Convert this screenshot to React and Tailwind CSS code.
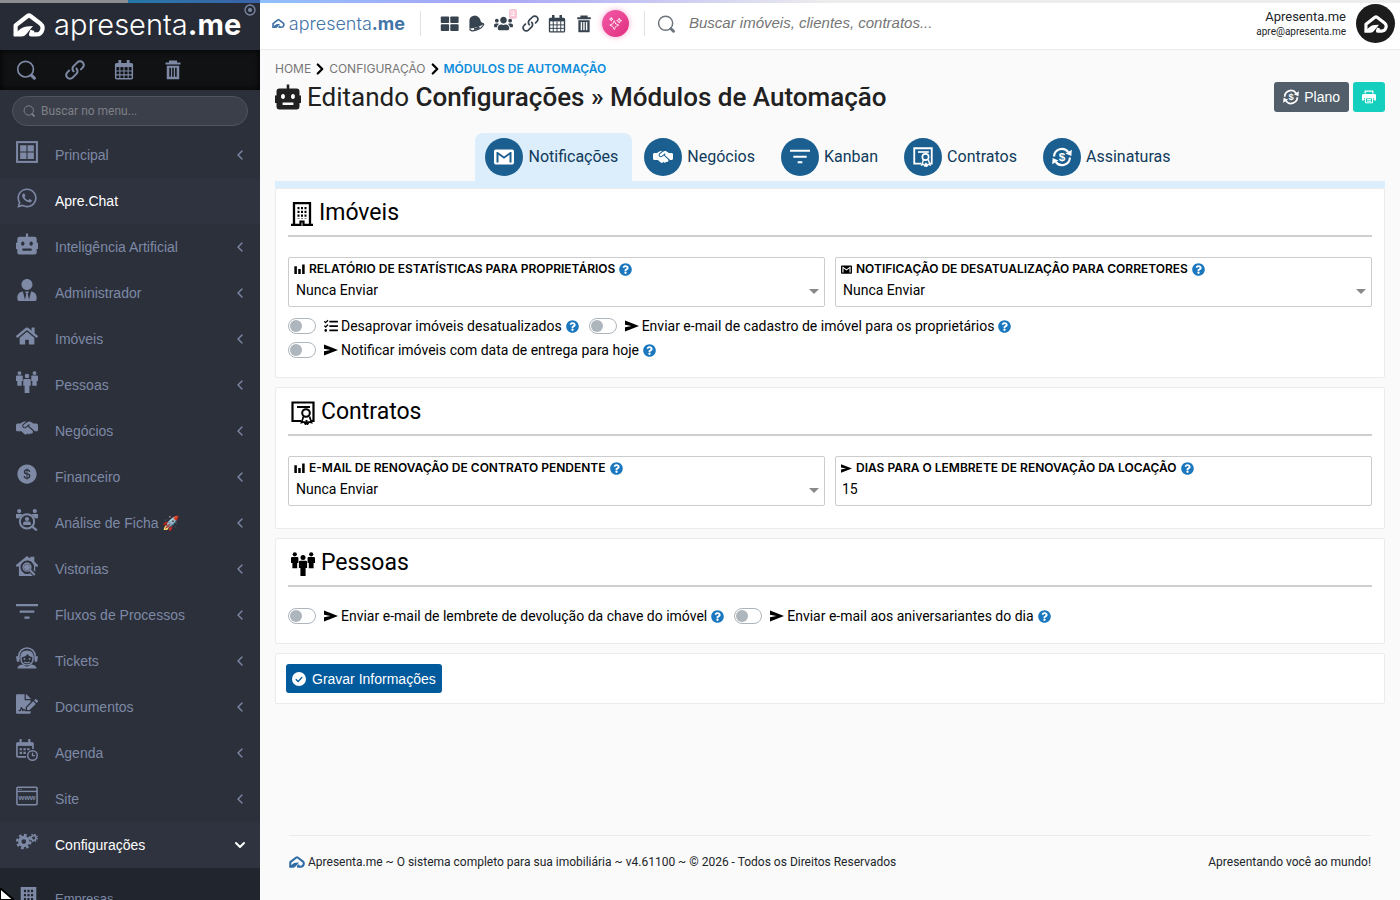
import { FaFileSignature, FaHome, FaQuestionCircle, FaTasks, FaUsers, FaUserTie, FaWhatsapp } from "react-icons/fa";
import { FaHandshakeSimple } from "react-icons/fa6";
import { AiFillDollarCircle } from "react-icons/ai";
import { ImLink } from "react-icons/im";
import { IoSparklesOutline } from "react-icons/io5";
import { ChevronDown, ChevronLeft, ChevronRight } from "lucide-react";

/* ---------- Icons ---------- */

function Icon({ className, children }) {
  return (
    <svg viewBox="0 0 24 24" className={className} fill="none" stroke="currentColor" strokeWidth="2" aria-hidden="true">
      {children}
    </svg>
  );
}

function LogoMark({ className }) {
  return (
    <svg viewBox="0 0 32 24" className={className} fill="none" stroke="currentColor" strokeWidth="4.2" strokeLinejoin="round" aria-hidden="true">
      <path d="M2.6 22V12.4L14.6 3Q16 2 17.4 3L27.400 10.600Q30.400 13 29.300 16.800Q28 21.400 23.600 21.400H18L19.400 17.400" />
      <path d="M.6 23.500V21.500L8 15.600Q10.500 13.600 13.500 13.400L20 13L13.200 21.200Q11.400 23.500 8.600 23.500z" fill="currentColor" stroke="none" />
    </svg>
  );
}

function SearchIcon({ className }) {
  return (
    <Icon className={className}>
      <circle cx="11.5" cy="11" r="9.4" strokeWidth="2" />
      <path d="M18.6 18.4l3.4 3.4" strokeWidth="3.8" strokeLinecap="round" />
    </Icon>
  );
}

function CalendarIcon({ className }) {
  return (
    <Icon className={className}>
      <rect x="2" y="4.5" width="20" height="18" rx="1.2" strokeWidth="1.8" />
      <path d="M2 4.5h20v4H2z" fill="currentColor" stroke="none" />
      <path d="M7 1v6M17 1v6" strokeWidth="3.4" strokeLinecap="round" />
      <path d="M2 13.2h20M2 17.8h20M7 8.5v14M12 8.5v14M17 8.5v14" strokeWidth="1.3" />
    </Icon>
  );
}

function TrashIcon({ className }) {
  return (
    <Icon className={className}>
      <path d="M3 4.2h18M8.5 3.5V1.8h7v1.7" strokeWidth="2.6" />
      <path d="M4.5 7h15v16h-15zM7.6 9.4v10.8h1.9V9.4zM11 9.4v10.8h1.9V9.4zM14.5 9.4v10.8h1.9V9.4z" fill="currentColor" fillRule="evenodd" stroke="none" />
    </Icon>
  );
}

function RobotIcon({ className }) {
  return (
    <Icon className={className}>
      <path
        d="M10.800 .5h2.400v3.700H20q2.600 0 2.600 2.600v3.700H24v7h-1.400v3.700q0 2.300-2.300 2.300H3.700q-2.300 0-2.300-2.300v-3.700H0v-7h1.400V6.800q0-2.600 2.600-2.600h6.800zM7.400 9.200c-2.400 0-2.400 4.600 0 4.600s2.400-4.600 0-4.600zM16.600 9.200c-2.400 0-2.400 4.600 0 4.600s2.400-4.600 0-4.600zM7 17v2.400h10V17z"
        fill="currentColor"
        fillRule="evenodd"
        stroke="none"
      />
    </Icon>
  );
}

function PeopleIcon({ className }) {
  return (
    <Icon className={className}>
      <g fill="currentColor" stroke="none">
        <circle cx="3.800" cy="2.300" r="2.100" />
        <circle cx="20.200" cy="2.300" r="2.100" />
        <circle cx="12" cy="5.500" r="2.500" />
        <path d="M1.200 4.900h5.200q1 0 1 1.100V11H6.200v5.200H1.400V11H0V6.100q0-1.200 1.200-1.200zM17.600 4.900h5.200Q24 4.900 24 6.100V11h-1.400v5.200h-4.800V11h-1.200V6q0-1.100 1-1.100z" />
        <path d="M9.200 8.800h5.600q1.300 0 1.300 1.300V16h-1.500v8H9.400v-8H7.900v-5.900q0-1.300 1.300-1.300z" />
      </g>
    </Icon>
  );
}

function DashboardIcon({ className }) {
  return (
    <Icon className={className}>
      <rect x="1.200" y="1.200" width="21.600" height="21.600" strokeWidth="2.200" />
      <path d="M4.500 4.500h6.900v6.900H4.500zM12.600 4.500h6.900v6.900h-6.900zM4.500 12.600h6.900v6.900H4.500zM12.600 12.600h6.900v6.900h-6.900z" fill="currentColor" stroke="none" />
    </Icon>
  );
}

function PeopleSearchIcon({ className }) {
  return (
    <Icon className={className}>
      <circle cx="12" cy="13.500" r="7.800" strokeWidth="2.200" />
      <path d="M18 19.500l4.800 3.800" strokeWidth="2.600" />
      <g fill="currentColor" stroke="none">
        <circle cx="3.500" cy="2.300" r="2.300" />
        <circle cx="20.500" cy="2.300" r="2.300" />
        <path d="M0 5.400h7.200L3.300 10H0zM24 5.400h-7.200L20.700 10H24z" />
        <circle cx="12" cy="11" r="2.300" />
        <path d="M7.800 17.500v-2q0-1.800 1.800-1.800h4.800q1.800 0 1.800 1.800v2z" />
      </g>
    </Icon>
  );
}

function HouseSearchIcon({ className }) {
  return (
    <Icon className={className}>
      <path
        d="M12 1l3.500 2.800V2H20v5.200l4 3.600v1.700h-3v5.700l-2-1.800A7.400 7.400 0 1 0 15.400 20l3 3H3.200V12.500H0v-1.700zM12 10a3.300 3.300 0 1 1 0 6.600a3.300 3.300 0 1 1 0-6.600z"
        fill="currentColor"
        stroke="none"
      />
      <circle cx="12" cy="13.300" r="4.300" strokeWidth="1.600" />
      <path d="M15 16.300l5.500 5.500" strokeWidth="2.400" />
    </Icon>
  );
}

function FlowIcon({ className }) {
  return (
    <Icon className={className}>
      <path d="M0 4.400h24M4 11.600h16M9.200 18.200h5.600" strokeWidth="2.500" />
    </Icon>
  );
}

function AgentIcon({ className }) {
  return (
    <Icon className={className}>
      <path d="M3 14V10a9 9 0 0 1 18 0v4" strokeWidth="1.700" />
      <path d="M5.500 10.500Q6 4.500 12 4.500t6.500 6v3.500q-.8 5.500-6.500 5.500T5.500 14z" strokeWidth="1.600" />
      <path d="M5 11q1-7 7-7t7 7q-4 0-6.500-3.500Q10 11 5 11zM0 10h3.600v6H1zM20.400 10H24l-1 6h-2.600zM1.500 23.500q.5-4 5.500-4.500l5 2.500 5-2.500q5 .5 5.500 4.500z" fill="currentColor" stroke="none" />
      <circle cx="9.200" cy="13" r="1" fill="currentColor" stroke="none" />
      <circle cx="14.800" cy="13" r="1" fill="currentColor" stroke="none" />
      <path d="M9 16.300q3 1.800 6 0" strokeWidth="1.300" />
    </Icon>
  );
}

function AgendaIcon({ className }) {
  return (
    <Icon className={className}>
      <path d="M11 19.500H2.200Q1 19.500 1 18V5h17.500v6" strokeWidth="1.800" />
      <path d="M1 3.500h17.500v4H1z" fill="currentColor" stroke="none" />
      <path d="M5 1v4M14.500 1v4" strokeWidth="2.400" strokeLinecap="round" />
      <path d="M4 11.200h11.500M4 15.200h7" strokeWidth="2.400" strokeDasharray="2.600 1.500" />
      <circle cx="18" cy="18" r="5.200" strokeWidth="1.600" />
      <path d="M18 15v3.200h2.600" strokeWidth="1.500" />
    </Icon>
  );
}

function SiteIcon({ className }) {
  return (
    <Icon className={className}>
      <rect x="1" y="2.500" width="22" height="19" rx="1.200" strokeWidth="1.700" />
      <path d="M1 7h22" strokeWidth="1.500" />
      <path d="M3 4.800h3" strokeWidth="1.200" strokeDasharray="1 1" />
      <text x="12" y="16.500" textAnchor="middle" fontSize="8" fontWeight="700" fontFamily="Liberation Sans, sans-serif" fill="currentColor" stroke="none">www</text>
    </Icon>
  );
}

function GearsIcon({ className }) {
  return (
    <Icon className={className}>
      <circle cx="8.500" cy="11.500" r="4.400" strokeWidth="3.600" />
      <circle cx="8.500" cy="11.500" r="7.200" strokeWidth="2.600" strokeDasharray="3 2.650" />
      <circle cx="19.300" cy="7.500" r="2.500" strokeWidth="1.700" />
      <circle cx="19.300" cy="7.500" r="3.900" strokeWidth="1.500" strokeDasharray="1.600 1.460" />
    </Icon>
  );
}

function CertificateIcon({ className }) {
  return (
    <Icon className={className}>
      <path d="M10 20H1.500V1.500h21V20H20" strokeWidth="2.200" />
      <path d="M6 6h13" />
      <circle cx="15" cy="12" r="3.800" strokeWidth="2" />
      <path d="M12.500 15.500l-2 6 2.500-.6 1.500 2.300 1-4 1 4 1.500-2.300 2.500.6-2-6" strokeWidth="1.700" />
    </Icon>
  );
}

function MailIcon({ className }) {
  return (
    <Icon className={className}>
      <path
        d="M2 3h20q2 0 2 2v14q0 2-2 2H2q-2 0-2-2V5q0-2 2-2zM3 6v12.500h2.400V9.200L12 14l6.600-4.800v9.300H21V6h-1.500L12 11.400 4.500 6z"
        fill="currentColor"
        fillRule="evenodd"
        stroke="none"
      />
    </Icon>
  );
}

function BuildingIcon() {
  return (
    <svg viewBox="0 0 22 24" className="h-6 w-[22px]" fill="none" stroke="currentColor" aria-hidden="true">
      <path d="M3 22.500V1.200h16v21.300" strokeWidth="2.300" />
      <path d="M0 22.800h9.500v-3.300h3v3.300H22" strokeWidth="2.200" />
      <path d="M7.500 5v12M11 5v12M14.500 5v12" strokeWidth="2" strokeDasharray="2.200 1.600" />
    </svg>
  );
}

function CompanyIcon({ className }) {
  return (
    <Icon className={className}>
      <path d="M1 0h22v24H1zM5.500 4v3.400h3V4zM10.500 4v3.400h3V4zM15.500 4v3.400h3V4zM5.500 9.800v3.400h3V9.800zM10.500 9.800v3.400h3V9.800zM15.500 9.800v3.400h3V9.800zM5.500 15.600V19h3v-3.400zM10.500 15.600V19h3v-3.400zM15.500 15.600V19h3v-3.400z" fill="currentColor" fillRule="evenodd" stroke="none" />
    </Icon>
  );
}

function RenewIcon({ className }) {
  return (
    <Icon className={className}>
      <path d="M2.500 11.500A9.500 9.500 0 0 1 19.500 6M21.500 12.500A9.500 9.500 0 0 1 4.500 18" strokeWidth="2.600" />
      <path d="M23.800 3.200l-.6 7.600-7-3zM.2 20.800l.6-7.600 7 3z" fill="currentColor" stroke="none" />
      <text x="12" y="17" textAnchor="middle" fontSize="14" fontWeight="700" fontFamily="Liberation Sans, sans-serif" fill="currentColor" stroke="none">$</text>
    </Icon>
  );
}

function BellIcon({ className }) {
  return (
    <Icon className={className}>
      <path d="M2 19.500V7Q3 1.500 8.500 1q2-1 3.500.3Q17 3 18 9q1.500 2 5 2.800-4 5.200-21 7.700z" fill="currentColor" stroke="none" />
      <path d="M2.500 19.500q.5 4 8 2.300Q20.500 19 22.500 12.500" strokeWidth="1.700" />
      <path d="M8.500 20q5-.8 7.500-3" strokeWidth="2.600" />
    </Icon>
  );
}

function TilesIcon({ className }) {
  return (
    <Icon className={className}>
      <g fill="currentColor" stroke="none">
        <rect x="1" y="3" width="10.500" height="8.500" rx="1" />
        <rect x="13" y="3" width="10.500" height="8.500" rx="1" />
        <rect x="1" y="13" width="10.500" height="8.500" rx="1" />
        <rect x="13" y="13" width="10.500" height="8.500" rx="1" />
      </g>
    </Icon>
  );
}

function BarsIcon({ className }) {
  return (
    <Icon className={className}>
      <path d="M3.500 5v17M12 11v11M20.500 1v21" strokeWidth="5.500" />
    </Icon>
  );
}

function SendIcon({ className }) {
  return (
    <Icon className={className}>
      <path d="M0 2.500L24 12 0 21.500V14.300L11 12 0 9.700z" fill="currentColor" stroke="none" />
    </Icon>
  );
}

function PrintIcon({ className }) {
  return (
    <Icon className={className}>
      <path d="M5.500 6V2h13v4" strokeWidth="2.200" />
      <path d="M2.500 7h19Q24 7 24 9.500V18h-4v-4.500H4V18H0V9.500Q0 7 2.500 7z" fill="currentColor" stroke="none" />
      <path d="M6 13.500h12V22H6zM8.500 16.500h7M8.500 19.300h7" strokeWidth="1.700" />
    </Icon>
  );
}

function CheckIcon({ className }) {
  return (
    <Icon className={className}>
      <circle cx="12" cy="12" r="12" fill="currentColor" stroke="none" />
      <path d="M6.500 12.500l4 3.800 7-7.500" stroke="#005a9c" strokeWidth="2.400" />
    </Icon>
  );
}

/* ---------- Data ---------- */

const MENU = [
  { label: "Principal", icon: DashboardIcon },
  { label: "Apre.Chat", icon: FaWhatsapp, active: true, leaf: true },
  { label: "Inteligência Artificial", icon: RobotIcon },
  { label: "Administrador", icon: FaUserTie },
  { label: "Imóveis", icon: FaHome },
  { label: "Pessoas", icon: PeopleIcon },
  { label: "Negócios", icon: FaHandshakeSimple },
  { label: "Financeiro", icon: AiFillDollarCircle },
  { label: "Análise de Ficha 🚀", icon: PeopleSearchIcon },
  { label: "Vistorias", icon: HouseSearchIcon },
  { label: "Fluxos de Processos", icon: FlowIcon },
  { label: "Tickets", icon: AgentIcon },
  { label: "Documentos", icon: FaFileSignature },
  { label: "Agenda", icon: AgendaIcon },
  { label: "Site", icon: SiteIcon },
  { label: "Configurações", icon: GearsIcon, active: true, open: true },
];

const TABS = [
  { label: "Notificações", icon: MailIcon, active: true },
  { label: "Negócios", icon: FaHandshakeSimple },
  { label: "Kanban", icon: FlowIcon },
  { label: "Contratos", icon: CertificateIcon },
  { label: "Assinaturas", icon: RenewIcon },
];

/* ---------- Sidebar ---------- */

function Sidebar() {
  return (
    <aside className="sticky top-0 flex h-screen w-[260px] shrink-0 flex-col overflow-hidden bg-[#2c303b] font-['Liberation_Sans',sans-serif] text-[#7d89a5]">
      <div className="relative h-[50px] shrink-0 bg-[#272b35]">
        <div className="absolute inset-x-0 top-0 flex h-[3px]">
          <div className="w-32 bg-[#8b8d91]" />
          <div className="flex-1 bg-linear-to-r from-[#2478a8] to-[#3a62a8]" />
        </div>
        <a href="#" className="flex h-full items-center gap-[9px] pl-[13px] text-white">
          <LogoMark className="h-6 w-8" />
          <span className="font-['Inter',sans-serif] text-[29px] leading-10 font-light">
            apresenta<b className="font-bold">.me</b>
          </span>
        </a>
        <button aria-label="Fixar menu" className="absolute top-1 right-1">
          <Icon className="size-3">
            <circle cx="12" cy="12" r="10" strokeWidth="2.600" />
            <circle cx="12" cy="12" r="4" fill="currentColor" stroke="none" />
          </Icon>
        </button>
      </div>
      <div className="flex h-10 shrink-0 items-center gap-[29px] bg-[#111214] pl-4 shadow-[inset_0_0_6px_#000]">
        <button aria-label="Buscar"><SearchIcon className="size-5" /></button>
        <button aria-label="Links"><ImLink className="size-5" /></button>
        <button aria-label="Agenda"><CalendarIcon className="size-5" /></button>
        <button aria-label="Lixeira"><TrashIcon className="size-5" /></button>
      </div>
      <label className="mx-3 my-[6px] flex h-[30px] shrink-0 items-center gap-[6px] rounded-full border border-[#50545f] bg-[#3b3f49] px-[10px] text-[#7d8087]">
        <SearchIcon className="size-3" />
        <input
          aria-label="Buscar no menu"
          placeholder="Buscar no menu..."
          className="min-w-0 flex-1 bg-transparent font-['Roboto',sans-serif] text-xs outline-none placeholder:text-[#7d8087]"
        />
      </label>
      <nav className="text-sm">
        {MENU.map(({ label, icon: ItemIcon, active, leaf, open }) => (
          <a key={label} href="#" className={`flex h-[46px] items-center pr-3 pl-4 ${active ? "bg-[#2f3340] text-white" : ""}`}>
            <span className="mr-[17px] pb-[6px] text-[#7d89a5]">
              <ItemIcon className="size-[22px]" />
            </span>
            <span className="flex-1">{label}</span>
            {!leaf && (open ? <ChevronDown className="size-4" strokeWidth={3} /> : <ChevronLeft className="size-4" strokeWidth={2} />)}
          </a>
        ))}
        <div className="bg-[#21252e] pt-2">
          <a href="#" className="flex h-[46px] items-center pl-5 text-[13px]">
            <span className="mr-[18px] pb-2">
              <CompanyIcon className="size-[17px]" />
            </span>
            Empresas
          </a>
        </div>
      </nav>
    </aside>
  );
}

/* ---------- Top bar ---------- */

function TopBar() {
  return (
    <header className="relative border-b border-[#ebebeb] bg-white">
      <div className="absolute inset-x-0 top-0 h-[3px] bg-linear-to-r from-[#8fc0fb] via-[#a8a4f6] via-20% to-[#ededed] to-50%" />
      <div className="flex h-[49px] items-center pr-[5px] pb-[2px] pl-3">
        <a href="#" className="flex w-[133px] items-center gap-1 text-[#4274a8]">
          <LogoMark className="h-[15px] w-[19px]" />
          <span className="font-['Inter',sans-serif] text-lg leading-6 font-light">
            apresenta<b className="font-bold">.me</b>
          </span>
        </a>
        <div className="mx-[15px] h-[25px] w-px bg-[#dfe2e6]" />
        <div className="flex items-center gap-[9px] pl-1 text-[#37434f]">
          <button aria-label="Painel"><TilesIcon className="size-[19px]" /></button>
          <button aria-label="Notificações"><BellIcon className="size-[17px]" /></button>
          <button aria-label="Pessoas" className="relative">
            <FaUsers className="size-[19px]" />
            <span className="absolute -top-[5px] -right-1 rounded-xs bg-[#f9c8d6] px-[2px] text-[8px] leading-[10px] text-white">3</span>
          </button>
          <button aria-label="Links"><ImLink className="size-[17px]" /></button>
          <button aria-label="Agenda"><CalendarIcon className="size-[18px]" /></button>
          <button aria-label="Lixeira"><TrashIcon className="size-[18px]" /></button>
          <button aria-label="Assistente" className="flex size-[27px] items-center justify-center rounded-full bg-linear-to-br from-[#f25aa8] to-[#df2b7e] text-white shadow-[0_0_6px_#f9a8d4]">
            <IoSparklesOutline className="size-[13px]" />
          </button>
        </div>
        <div className="mr-3 ml-[15px] h-[25px] w-px bg-[#dfe2e6]" />
        <label className="flex flex-1 items-center gap-[14px] text-[#6c757d]">
          <SearchIcon className="size-[18px]" />
          <input
            aria-label="Buscar"
            placeholder="Buscar imóveis, clientes, contratos..."
            className="min-w-0 flex-1 bg-transparent font-['Liberation_Sans',sans-serif] text-[15px] italic outline-none placeholder:text-[#757575]"
          />
        </label>
        <div className="mr-[10px] text-right text-[#212529]">
          <p className="text-[13px] leading-4">Apresenta.me</p>
          <p className="text-[10px] leading-[14px]">apre@apresenta.me</p>
        </div>
        <a href="#" aria-label="Perfil" className="flex size-[39px] items-center justify-center rounded-full bg-[#1c1c1c] text-white">
          <LogoMark className="h-[18px] w-6" />
        </a>
      </div>
    </header>
  );
}

/* ---------- Form parts ---------- */

function Card({ title, icon: TitleIcon, className, children }) {
  return (
    <section className={`rounded-xs border border-[#ebebeb] bg-white px-3 ${className}`}>
      <h2 className="mb-5 flex h-12 items-center gap-[6px] border-b-2 border-[#cfcfcf] pt-[3px] pl-[3px] text-[23px] text-black">
        <TitleIcon className="size-6" />
        {title}
      </h2>
      {children}
    </section>
  );
}

function Help() {
  return (
    <button type="button" aria-label="Ajuda" className="text-[#1b78bf]">
      <FaQuestionCircle className="size-[13px]" />
    </button>
  );
}

function Field({ id, label, icon: LabelIcon, children }) {
  return (
    <div className="relative h-[50px] rounded-xs border border-[#ccc] bg-white text-black">
      <div className="flex h-[22px] items-center gap-1 pl-[5px]">
        <LabelIcon className="size-[11px]" />
        <label htmlFor={id} className="font-['Inter',sans-serif] text-xs font-semibold uppercase">{label}</label>
        <Help />
      </div>
      {children}
    </div>
  );
}

function SelectField({ id, label, icon }) {
  return (
    <Field id={id} label={label} icon={icon}>
      <select id={id} className="block h-5 w-full appearance-none bg-transparent pl-[7px] text-sm leading-5 outline-none">
        <option>Nunca Enviar</option>
      </select>
      <svg viewBox="0 0 10 5" className="pointer-events-none absolute right-[5px] bottom-3 h-[5px] w-[10px] fill-[#888]">
        <path d="M0 0h10L5 5z" />
      </svg>
    </Field>
  );
}

function Toggle({ id, icon: ToggleIcon, label }) {
  return (
    <div className="flex h-6 items-center text-sm text-black">
      <input
        id={id}
        type="checkbox"
        className="mr-2 h-4 w-7 appearance-none rounded-full border border-[#adb5bd] p-px before:block before:size-3 before:rounded-full before:bg-[#adb5bd] checked:before:translate-x-3"
      />
      <label htmlFor={id} className="mr-1 flex items-center gap-[3px]">
        <ToggleIcon className="size-[14px]" />
        {label}
      </label>
      <Help />
    </div>
  );
}

/* ---------- Page ---------- */

export default function App() {
  return (
    <div className="flex min-h-screen bg-[#fafafa] font-['Roboto',sans-serif]">
      <Sidebar />
      <div className="flex min-w-0 flex-1 flex-col">
        <TopBar />
        <main className="px-[15px] pt-[11px]">
          <nav aria-label="Trilha" className="flex h-4 items-center font-['Inter',sans-serif] text-xs text-[#777]">
            <a href="#">HOME</a>
            <ChevronRight className="size-[18px] text-black" strokeWidth={3} />
            <a href="#">CONFIGURAÇÃO</a>
            <ChevronRight className="size-[18px] text-black" strokeWidth={3} />
            <a href="#" className="font-semibold text-[#0d8ddb]">MÓDULOS DE AUTOMAÇÃO</a>
          </nav>
          <div className="flex items-center justify-between pt-1">
            <h1 className="flex h-8 items-center gap-[6px] text-[26px] text-[#212121]">
              <RobotIcon className="size-[26px]" />
              <span>Editando <b className="font-medium">Configurações » Módulos de Automação</b></span>
            </h1>
            <div className="flex gap-1 font-['Liberation_Sans',sans-serif] text-white">
              <button className="flex h-[30px] items-center gap-[5px] rounded-[3px] bg-[#525f6b] px-[9px] text-sm">
                <RenewIcon className="size-4" />
                Plano
              </button>
              <button aria-label="Imprimir" className="flex h-[30px] w-8 items-center justify-center rounded-[3px] bg-[#14cfbd]">
                <PrintIcon className="size-[14px]" />
              </button>
            </div>
          </div>
          <div role="tablist" className="mt-5 flex justify-center gap-[2px] border-b-[7px] border-[#dceefb]">
            {TABS.map(({ label, icon: TabIcon, active }) => (
              <button
                key={label}
                role="tab"
                aria-selected={!!active}
                className={`flex h-12 items-center gap-[5px] rounded-t-lg pr-[14px] pl-[10px] text-base text-[#0f3a5c] ${active ? "bg-[#dceefb]" : ""}`}
              >
                <span className="flex size-[38px] items-center justify-center rounded-full bg-[#1a5f90] text-white">
                  <TabIcon className="size-5" />
                </span>
                {label}
              </button>
            ))}
          </div>
          <form className="flex flex-col gap-[9px]" onSubmit={(e) => e.preventDefault()}>
            <Card title="Imóveis" icon={BuildingIcon} className="pb-[15px]">
              <div className="grid grid-cols-2 gap-[10px]">
                <SelectField id="relatorio" label="Relatório de estatísticas para proprietários" icon={BarsIcon} />
                <SelectField id="desatualizacao" label="Notificação de desatualização para corretores" icon={MailIcon} />
              </div>
              <div className="mt-[7px] flex flex-wrap gap-x-[10px]">
                <Toggle id="desaprovar" icon={FaTasks} label="Desaprovar imóveis desatualizados" />
                <Toggle id="cadastro" icon={SendIcon} label="Enviar e-mail de cadastro de imóvel para os proprietários" />
                <div className="basis-full" />
                <Toggle id="entrega" icon={SendIcon} label="Notificar imóveis com data de entrega para hoje" />
              </div>
            </Card>
            <Card title="Contratos" icon={CertificateIcon} className="pb-[22px]">
              <div className="grid grid-cols-2 gap-[10px]">
                <SelectField id="renovacao" label="E-mail de renovação de contrato pendente" icon={BarsIcon} />
                <Field id="dias" label="Dias para o lembrete de renovação da locação" icon={SendIcon}>
                  <input id="dias" defaultValue="15" className="block h-5 w-full bg-transparent pl-[6px] text-sm leading-5 outline-none" />
                </Field>
              </div>
            </Card>
            <Card title="Pessoas" icon={PeopleIcon} className="pb-[15px]">
              <div className="-mt-[3px] flex flex-wrap gap-x-[10px]">
                <Toggle id="chave" icon={SendIcon} label="Enviar e-mail de lembrete de devolução da chave do imóvel" />
                <Toggle id="aniversario" icon={SendIcon} label="Enviar e-mail aos aniversariantes do dia" />
              </div>
            </Card>
            <div className="rounded-xs border border-[#ebebeb] bg-white p-[10px]">
              <button className="flex h-[29px] items-center gap-[6px] rounded-[3px] bg-[#005a9c] px-[6px] font-['Liberation_Sans',sans-serif] text-sm text-white">
                <CheckIcon className="size-[14px]" />
                Gravar Informações
              </button>
            </div>
          </form>
        </main>
        <footer className="mx-[29px] mt-auto flex h-[65px] items-start justify-between border-t border-[#ebebeb] pt-[18px] text-xs text-[#212529]">
          <p className="flex items-center gap-[3px]">
            <LogoMark className="h-3 w-4 text-[#2e6ca4]" />
            Apresenta.me ~ O sistema completo para sua imobiliária ~ v4.61100 ~ © 2026 - Todos os Direitos Reservados
          </p>
          <p>Apresentando você ao mundo!</p>
        </footer>
      </div>
      {/* Cursor */}
      <svg viewBox="0 0 14 12" className="pointer-events-none fixed bottom-0 left-0 h-3 w-[14px]" aria-hidden="true">
        <path d="M0 0L14 12H0z" fill="#fff" stroke="#000" strokeWidth="2" />
      </svg>
    </div>
  );
}
